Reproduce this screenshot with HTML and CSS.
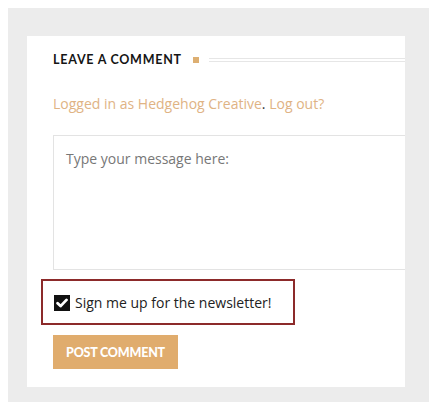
FILE: index.html
```html
<!DOCTYPE html>
<html lang="en">
<head>
    <meta charset="UTF-8">
    <meta name="viewport" content="width=device-width, initial-scale=1.0">
    <title>Leave a comment</title>
    <link rel="stylesheet" href="styles.css">
</head>
<body>
    <div class="wrap">
        <div class="card">
            <div class="title-row">
                <h3 class="title">Leave a Comment</h3>
                <span class="title-dot"></span>
                <span class="title-line"></span>
            </div>

            <p class="logged">
                <a href="#">Logged in as Hedgehog Creative</a>. <a href="#">Log out?</a>
            </p>

            <textarea class="message" placeholder="Type your message here:"></textarea>

            <label class="newsletter">
                <span class="check">
                    <svg width="12" height="10" viewBox="0 0 12 10">
                        <path d="M1.6 5.2 L4.6 8.1 L10.5 1.9" fill="none" stroke="#fff" stroke-width="2.8" stroke-linecap="round" stroke-linejoin="round"/>
                    </svg>
                </span>
                Sign me up for the newsletter!
            </label>

            <button class="post-btn">Post Comment</button>
        </div>
    </div>
</body>
</html>
```

FILE: styles.css
```css
body {
    margin: 8px;
    background-color: #fff;
    font-family: "Open Sans", Arial, sans-serif;
}

.wrap {
    width: 421px;
    height: 394px;
    background-color: #ececec;
    padding: 28px 24px 0 19px;
    box-sizing: border-box;
}

.card {
    background-color: #fff;
    height: 351px;
    padding: 14px 0 0 26px;
    box-sizing: border-box;
    overflow: hidden;
    display: flex;
    flex-direction: column;
    align-items: flex-start;
}

.title-row {
    display: flex;
    align-items: center;
    width: 100%;
    height: 20px;
}

.title {
    margin: 0;
    font-family: "Lato", sans-serif;
    font-weight: 700;
    font-size: 12.5px;
    letter-spacing: 0.75px;
    text-transform: uppercase;
    color: #151515;
    line-height: 20px;
}

.title-dot {
    width: 6px;
    height: 6px;
    background-color: #ddaf72;
    margin-left: 11px;
}

.title-line {
    flex: 1;
    height: 2px;
    border-top: 1px solid #e6e6e6;
    border-bottom: 1px solid #e6e6e6;
    margin-left: 10px;
}

.logged {
    margin: 23px 0 0;
    font-size: 14px;
    line-height: 22px;
    color: #333;
}

.logged a {
    color: #e0b384;
    text-decoration: none;
}

.message {
    margin-top: 20px;
    width: 380px;
    height: 135px;
    box-sizing: border-box;
    border: 1px solid #e3e3e3;
    padding: 12px 12px;
    font-family: "Open Sans", Arial, sans-serif;
    font-size: 14px;
    line-height: 22px;
    resize: none;
    outline: none;
}

.message::placeholder {
    color: #777;
}

.newsletter {
    margin: 9px 0 0 -12px;
    width: 254px;
    height: 46px;
    box-sizing: border-box;
    border: 2px solid #8c2a2a;
    padding-left: 11px;
    display: flex;
    align-items: center;
    gap: 5px;
    font-size: 14px;
    color: #222;
}

.check {
    width: 16px;
    height: 16px;
    background-color: #111;
    display: flex;
    align-items: center;
    justify-content: center;
    margin-top: 2px;
}

.post-btn {
    margin-top: 10px;
    width: 125px;
    height: 34px;
    border: none;
    background-color: #e0ac6d;
    color: #fff;
    font-family: "Lato", sans-serif;
    font-weight: 900;
    font-size: 12.5px;
    letter-spacing: -0.2px;
    text-transform: uppercase;
    padding: 0;
}
```
